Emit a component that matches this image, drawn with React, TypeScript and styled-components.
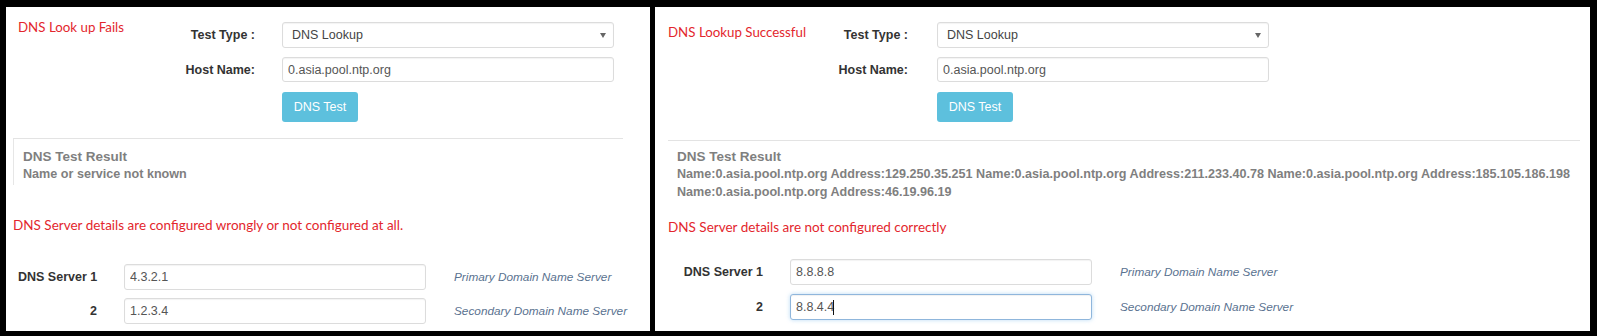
import React from "react";
import styled, { createGlobalStyle } from "styled-components";

const GlobalStyle = createGlobalStyle`
  html, body { margin: 0; padding: 0; background: #000; }
  * { box-sizing: border-box; }
`;

type Layout = {
  width: number;
  formLeft: number;
  labelCol: number;
  labelPad: number;
  titleShift: number;
  boxTop: number;
  boxLeft: number;
  boxRight: number;
  boxPadTop: number;
  boxPadBottom: number;
  boxSideBorder: boolean;
  msgTop: number;
  dnsTop: number;
  dnsLeft: number;
  dnsLabelCol: number;
  dnsRowGap: number;
};

const Screen = styled.div`
  display: flex;
  gap: 5px;
  height: 336px;
  padding: 7px 7px 5px 6px;
  background: #000;
`;

const Panel = styled.section<{ $w: number }>`
  width: ${(p) => p.$w}px;
  background: #fff;
  display: flex;
  flex-direction: column;
  font-family: "Liberation Sans", Arial, sans-serif;
  overflow: hidden;
`;

const FormGrid = styled.div<{ $left: number; $labelCol: number }>`
  display: grid;
  grid-template-columns: 150px ${(p) => p.$labelCol}px 332px;
  grid-auto-rows: auto;
  row-gap: 9px;
  margin: 15px 0 0 ${(p) => p.$left}px;
  align-items: center;
`;

const StatusTitle = styled.div<{ $shift: number }>`
  font-family: Lato, "Liberation Sans", sans-serif;
  font-size: 13.3px;
  line-height: 18px;
  color: #e3262d;
  align-self: start;
  margin-top: ${(p) => p.$shift}px;
`;

const FieldLabel = styled.label<{ $pad: number }>`
  grid-column: 2;
  text-align: right;
  padding-right: ${(p) => p.$pad}px;
  font-weight: bold;
  font-size: 12.5px;
  color: #333;
`;

const SelectWrap = styled.div`
  grid-column: 3;
  position: relative;
  height: 26px;
`;

const SelectBox = styled.select`
  appearance: none;
  -webkit-appearance: none;
  width: 100%;
  height: 100%;
  border: 1px solid #dcdcdc;
  border-radius: 3px;
  background: #fff;
  padding: 0 9px;
  font-family: "Liberation Sans", Arial, sans-serif;
  font-size: 12.5px;
  color: #444;
  box-shadow: inset 0 1px 1px rgba(0, 0, 0, 0.05);
`;

const Caret = styled.span`
  position: absolute;
  right: 8px;
  top: 11px;
  width: 0;
  height: 0;
  border-left: 3px solid transparent;
  border-right: 3px solid transparent;
  border-top: 5px solid #666;
  pointer-events: none;
`;

const TextInput = styled.input<{ $focus?: boolean; $h: number; $pad: number }>`
  width: 100%;
  height: ${(p) => p.$h}px;
  border: 1px solid ${(p) => (p.$focus ? "#8fb6dc" : "#dcdcdc")};
  border-radius: 3px;
  background: #fff;
  padding: 0 ${(p) => p.$pad}px;
  font-family: "Liberation Sans", Arial, sans-serif;
  font-size: 12.5px;
  color: #555;
  outline: none;
  box-shadow: ${(p) =>
    p.$focus
      ? "inset 0 1px 1px rgba(0,0,0,.06), 0 0 4px rgba(102,175,233,.45)"
      : "inset 0 1px 1px rgba(0,0,0,.05)"};
`;

const HostCell = styled.div`
  grid-column: 3;
`;

const ButtonCell = styled.div`
  grid-column: 3;
  margin-top: 1px;
`;

const InfoButton = styled.button`
  width: 76px;
  height: 30px;
  border: none;
  border-radius: 3px;
  background: #5dc0dd;
  color: #fff;
  font-family: "Liberation Sans", Arial, sans-serif;
  font-size: 12.5px;
  padding: 0;
`;

const ResultBox = styled.div<{ $top: number; $left: number; $right: number; $pt: number; $pb: number; $side: boolean }>`
  margin: ${(p) => p.$top}px ${(p) => p.$right}px 0 ${(p) => p.$left}px;
  border-top: 1px solid #e3e3e3;
  border-left: ${(p) => (p.$side ? "1px solid #e6e6e6" : "none")};
  padding: ${(p) => p.$pt}px 0 ${(p) => p.$pb}px 9px;
  color: #7f7f7f;
  font-weight: bold;
`;

const ResultTitle = styled.div`
  font-size: 13.5px;
  line-height: 16px;
`;

const ResultText = styled.div`
  font-size: 12.6px;
  line-height: 18px;
`;

const Message = styled.div<{ $top: number; $left: number }>`
  margin: ${(p) => p.$top}px 0 0 ${(p) => p.$left}px;
  font-family: Lato, "Liberation Sans", sans-serif;
  font-size: 13.5px;
  line-height: 20px;
  color: #e3262d;
`;

const DnsGrid = styled.div<{ $top: number; $left: number; $labelCol: number; $gap: number }>`
  display: grid;
  grid-template-columns: ${(p) => p.$labelCol}px 302px auto;
  column-gap: 27px;
  row-gap: ${(p) => p.$gap}px;
  margin: ${(p) => p.$top}px 0 0 ${(p) => p.$left}px;
  align-items: center;
`;

const DnsLabel = styled.label`
  text-align: right;
  font-weight: bold;
  font-size: 12.5px;
  color: #333;
  white-space: nowrap;
`;

const DnsInputWrap = styled.div`
  position: relative;
`;

const TextCursor = styled.span<{ $x: number }>`
  position: absolute;
  left: ${(p) => p.$x}px;
  top: 6px;
  width: 1px;
  height: 15px;
  background: #111;
`;

const HelpText = styled.span`
  padding-left: 1px;
  font-style: italic;
  font-size: 11.8px;
  color: #5a7290;
  white-space: nowrap;
`;

type PanelProps = {
  layout: Layout;
  status: string;
  result: string;
  message: string;
  dns1: string;
  dns2: string;
  focusSecond?: boolean;
};

const DnsPanel: React.FC<PanelProps> = ({ layout: l, status, result, message, dns1, dns2, focusSecond }) => (
  <Panel $w={l.width}>
    <FormGrid $left={l.formLeft} $labelCol={l.labelCol}>
      <StatusTitle $shift={l.titleShift}>{status}</StatusTitle>
      <FieldLabel $pad={l.labelPad}>Test Type :</FieldLabel>
      <SelectWrap>
        <SelectBox defaultValue="dns">
          <option value="dns">DNS Lookup</option>
        </SelectBox>
        <Caret />
      </SelectWrap>
      <FieldLabel $pad={l.labelPad}>Host Name:</FieldLabel>
      <HostCell>
        <TextInput $h={25} $pad={5} readOnly value="0.asia.pool.ntp.org" />
      </HostCell>
      <ButtonCell>
        <InfoButton type="button">DNS Test</InfoButton>
      </ButtonCell>
    </FormGrid>
    <ResultBox
      $top={l.boxTop}
      $left={l.boxLeft}
      $right={l.boxRight}
      $pt={l.boxPadTop}
      $pb={l.boxPadBottom}
      $side={l.boxSideBorder}
    >
      <ResultTitle>DNS Test Result</ResultTitle>
      <ResultText>{result}</ResultText>
    </ResultBox>
    <Message $top={l.msgTop} $left={l.boxLeft}>
      {message}
    </Message>
    <DnsGrid $top={l.dnsTop} $left={l.dnsLeft} $labelCol={l.dnsLabelCol} $gap={l.dnsRowGap}>
      <DnsLabel>DNS Server 1</DnsLabel>
      <DnsInputWrap>
        <TextInput $h={26} $pad={5} readOnly value={dns1} />
      </DnsInputWrap>
      <HelpText>Primary Domain Name Server</HelpText>
      <DnsLabel>2</DnsLabel>
      <DnsInputWrap>
        <TextInput $h={26} $pad={5} $focus={focusSecond} readOnly value={dns2} />
        {focusSecond && <TextCursor $x={43} />}
      </DnsInputWrap>
      <HelpText>Secondary Domain Name Server</HelpText>
    </DnsGrid>
  </Panel>
);

const leftLayout: Layout = {
  width: 644,
  formLeft: 12,
  labelCol: 114,
  labelPad: 27,
  titleShift: -4,
  boxTop: 16,
  boxLeft: 7,
  boxRight: 27,
  boxPadTop: 10,
  boxPadBottom: 2,
  boxSideBorder: true,
  msgTop: 30,
  dnsTop: 29,
  dnsLeft: 12,
  dnsLabelCol: 79,
  dnsRowGap: 8,
};

const rightLayout: Layout = {
  width: 935,
  formLeft: 13,
  labelCol: 119,
  labelPad: 29,
  titleShift: 1,
  boxTop: 18,
  boxLeft: 13,
  boxRight: 10,
  boxPadTop: 8,
  boxPadBottom: 0,
  boxSideBorder: false,
  msgTop: 16,
  dnsTop: 22,
  dnsLeft: 27,
  dnsLabelCol: 81,
  dnsRowGap: 9,
};

export default function App() {
  return (
    <>
      <GlobalStyle />
      <Screen>
        <DnsPanel
          layout={leftLayout}
          status="DNS Look up Fails"
          result="Name or service not known"
          message="DNS Server details are configured wrongly or not configured at all."
          dns1="4.3.2.1"
          dns2="1.2.3.4"
        />
        <DnsPanel
          layout={rightLayout}
          status="DNS Lookup Successful"
          result="Name:0.asia.pool.ntp.org Address:129.250.35.251 Name:0.asia.pool.ntp.org Address:211.233.40.78 Name:0.asia.pool.ntp.org Address:185.105.186.198 Name:0.asia.pool.ntp.org Address:46.19.96.19"
          message="DNS Server details are not configured correctly"
          dns1="8.8.8.8"
          dns2="8.8.4.4"
          focusSecond
        />
      </Screen>
    </>
  );
}
